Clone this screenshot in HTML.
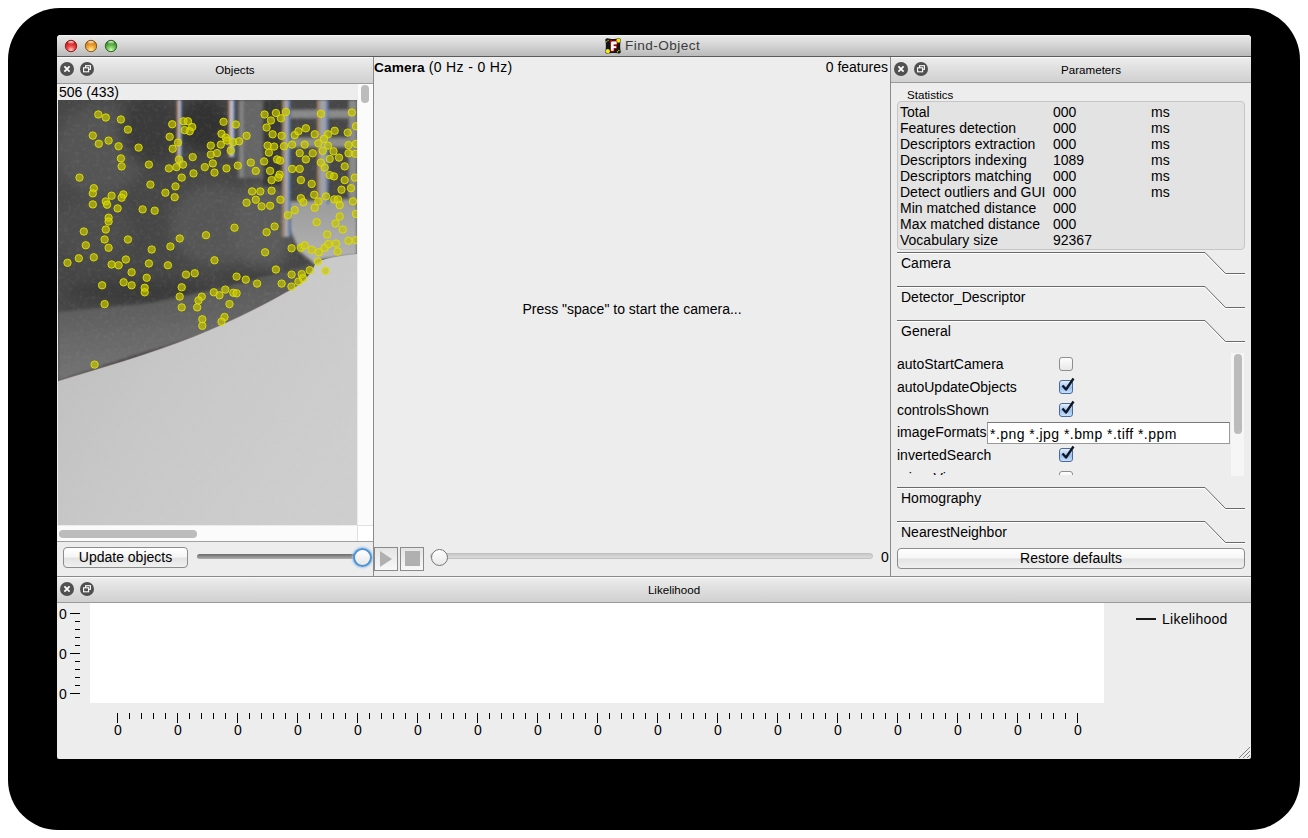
<!DOCTYPE html>
<html><head><meta charset="utf-8">
<style>
html,body{margin:0;padding:0;width:1308px;height:838px;overflow:hidden;background:#fff;font-family:"Liberation Sans",sans-serif;color:#000;position:relative;}
div{box-sizing:border-box;}
.a{position:absolute;}
.t{position:absolute;white-space:nowrap;font-size:14px;line-height:16px;}
#shadow{position:absolute;left:8px;top:8px;width:1292px;height:822px;background:#000;border-radius:52px 52px 50px 50px;}
#win{position:absolute;left:57px;top:35px;width:1194px;height:724px;background:#ededed;border-radius:4px 4px 2px 2px;}
#title{position:absolute;left:57px;top:35px;width:1194px;height:22px;background:linear-gradient(#e9e9e9,#d4d4d4 50%,#bababa);border-bottom:1px solid #5a5a5a;border-radius:4px 4px 0 0;box-shadow:inset 0 1px #f4f4f4;}
.light{position:absolute;top:40px;width:12px;height:12px;border-radius:50%;}
.dtb{position:absolute;background:linear-gradient(#ececec,#d0d0d0);border-top:1px solid #fafafa;border-bottom:1px solid #9a9a9a;}
.dbtn{position:absolute;width:14px;height:14px;}
.dtitle{position:absolute;font-size:11.6px;line-height:14px;white-space:nowrap;text-align:center;}
.btn{position:absolute;border:1px solid #8c8c8c;border-radius:4px;background:linear-gradient(#ffffff,#f6f6f6 45%,#e4e4e4 55%,#f0f0f0);text-align:center;font-size:14px;line-height:18px;white-space:nowrap;}
.vl{position:absolute;width:1px;background:#8a8a8a;}
.hl{position:absolute;height:1px;background:#8a8a8a;}
.tbh{position:absolute;left:897px;width:348px;height:23px;}
.cb{position:absolute;left:1059px;width:14px;height:14px;border:1px solid #8e8e8e;border-radius:3px;background:linear-gradient(#fdfdfd,#e8e8e8);}
.cbc{position:absolute;left:1059px;width:14px;height:14px;border:1px solid #4a6a9a;border-radius:3px;background:linear-gradient(#e6f0ff,#9cc0ee 55%,#c8e0ff);}
</style></head><body>
<div id="shadow"></div>
<div id="win"></div>
<div id="title"></div>
<svg class="a" style="left:63px;top:38px" width="56" height="16" viewBox="0 0 56 16">
<defs>
<radialGradient id="lr" cx="50%" cy="85%" r="70%"><stop offset="0" stop-color="#ffd0d0"/><stop offset="0.45" stop-color="#f05050"/><stop offset="1" stop-color="#c81818"/></radialGradient>
<radialGradient id="ly" cx="50%" cy="85%" r="70%"><stop offset="0" stop-color="#fff0b0"/><stop offset="0.45" stop-color="#f4b040"/><stop offset="1" stop-color="#d07810"/></radialGradient>
<radialGradient id="lg" cx="50%" cy="85%" r="70%"><stop offset="0" stop-color="#d8f8c0"/><stop offset="0.45" stop-color="#78c860"/><stop offset="1" stop-color="#3a8a28"/></radialGradient>
<linearGradient id="hi" x1="0" y1="0" x2="0" y2="1"><stop offset="0" stop-color="#fff" stop-opacity="0.95"/><stop offset="1" stop-color="#fff" stop-opacity="0"/></linearGradient>
</defs>
<g stroke-width="1">
<circle cx="8" cy="8" r="5.7" fill="url(#lr)" stroke="#8a2020"/>
<circle cx="28" cy="8" r="5.7" fill="url(#ly)" stroke="#8a5a18"/>
<circle cx="48" cy="8" r="5.7" fill="url(#lg)" stroke="#2a6a20"/>
</g>
<ellipse cx="8" cy="4.6" rx="3" ry="1.6" fill="url(#hi)"/>
<ellipse cx="28" cy="4.6" rx="3" ry="1.6" fill="url(#hi)"/>
<ellipse cx="48" cy="4.6" rx="3" ry="1.6" fill="url(#hi)"/>
</svg>
<svg class="a" style="left:605px;top:38px" width="16" height="16" viewBox="0 0 16 16">
  <path d="M2.5 0.3C5 1.2 11 1.2 13.5 0.3C15 0.3 15.8 1 15.8 2.5C15 5 15 11 15.8 13.5C15.8 15 15 15.6 13.5 15.6C11 14.8 5 14.8 2.5 15.6C1 15.6 0.3 15 0.3 13.5C1.1 11 1.1 5 0.3 2.5C0.3 1 1 0.3 2.5 0.3Z" fill="#141414"/>
  <circle cx="13.4" cy="2.7" r="2.1" fill="#f0f000"/><circle cx="2.8" cy="13.2" r="2.1" fill="#f0f000"/>
  <path d="M1.3 4.2L3.8 1.5M12 14.3L14.6 11.6" stroke="#c8c800" stroke-width="1.2" stroke-dasharray="1.2 0.8"/>
  <path d="M6 3.6h5.6v2.7h-3v1.9h2.6v1.9h-2.6v2.7h-2.6z" fill="#fff" stroke="#e01010" stroke-width="1.5" stroke-linejoin="round" paint-order="stroke"/>
  <path d="M4.6 3.5L6.5 1.8L7 4z" fill="#f01010"/>
</svg>
<div class="t" style="left:625px;top:38px;font-size:13.6px;letter-spacing:0.45px;color:#3c3c3c;">Find-Object</div>

<!-- ===== Objects dock ===== -->
<div class="dtb" style="left:57px;top:57px;width:316px;height:27px;"></div>
<svg class="dbtn" style="left:60px;top:62px" viewBox="0 0 14 14"><circle cx="7" cy="7" r="7" fill="#505050"/><path d="M4.4 4.4l5.2 5.2M9.6 4.4l-5.2 5.2" stroke="#fff" stroke-width="1.8"/></svg>
<svg class="dbtn" style="left:80px;top:62px" viewBox="0 0 14 14"><circle cx="7" cy="7" r="7" fill="#505050"/><rect x="5.6" y="3.7" width="4.8" height="3.6" fill="none" stroke="#fff" stroke-width="1.1"/><rect x="3.6" y="5.8" width="5" height="4" fill="#505050" stroke="#fff" stroke-width="1.1"/></svg>
<div class="dtitle" style="left:97px;width:276px;top:63px;">Objects</div>
<div class="t" style="left:59px;top:84px;">506 (433)</div>
<!-- scroll area frame -->
<div class="a" style="left:357px;top:84px;width:16px;height:441px;background:#fbfbfb;border-left:1px solid #ececec;"></div>
<div class="a" style="left:361px;top:85px;width:8px;height:18px;border-radius:4px;background:#bcbcbc;"></div>
<div class="a" style="left:57px;top:525px;width:300px;height:16px;background:#fbfbfb;border-top:1px solid #ececec;"></div>
<div class="a" style="left:59px;top:530px;width:138px;height:8px;border-radius:4px;background:#bcbcbc;"></div>
<div class="a" style="left:357px;top:525px;width:16px;height:16px;background:#fff;border-left:1px solid #e0e0e0;border-top:1px solid #e0e0e0;"></div>
<div class="hl" style="left:57px;top:541px;width:316px;background:#a0a0a0;"></div>
<svg class="a" style="left:58px;top:100px" width="299" height="425" viewBox="58 100 299 425">
<defs>
<filter id="bl" x="-10%" y="-10%" width="120%" height="120%"><feGaussianBlur stdDeviation="1.6"/></filter>
<filter id="bl1" x="-50%" y="-10%" width="200%" height="120%"><feGaussianBlur stdDeviation="0.8"/></filter>
<filter id="bl4" x="-30%" y="-30%" width="160%" height="160%"><feGaussianBlur stdDeviation="7"/></filter>
<filter id="noise" x="0" y="0" width="100%" height="100%"><feTurbulence type="fractalNoise" baseFrequency="0.25" numOctaves="2" seed="3"/><feColorMatrix values="0 0 0 0 0.5  0 0 0 0 0.5  0 0 0 0 0.5  0 0 0 1.4 -0.7"/></filter>
<linearGradient id="sh" x1="0" y1="0" x2="0.2" y2="1"><stop offset="0" stop-color="#3c3c3c"/><stop offset="0.28" stop-color="#585858"/><stop offset="0.7" stop-color="#6a6a6a"/><stop offset="1" stop-color="#747474"/></linearGradient>
<linearGradient id="rd" x1="0" y1="0" x2="1" y2="0.6"><stop offset="0" stop-color="#bcbcbc"/><stop offset="0.5" stop-color="#c8c8c8"/><stop offset="1" stop-color="#cecece"/></linearGradient>
<linearGradient id="fl" x1="0" y1="0" x2="0" y2="1"><stop offset="0" stop-color="#9a9a9a"/><stop offset="1" stop-color="#b4b4b4"/></linearGradient>
</defs>
<rect x="58" y="100" width="299" height="425" fill="#474747"/>
<g filter="url(#bl4)">
<ellipse cx="100" cy="150" rx="45" ry="45" fill="#555"/>
<ellipse cx="150" cy="130" rx="30" ry="35" fill="#3a3a3a"/>
<ellipse cx="205" cy="125" rx="25" ry="28" fill="#333"/>
<ellipse cx="90" cy="230" rx="40" ry="30" fill="#4e4e4e"/>
<ellipse cx="215" cy="225" rx="45" ry="40" fill="#565656"/>
<ellipse cx="262" cy="228" rx="30" ry="45" fill="#5c5c5c"/>
<ellipse cx="140" cy="292" rx="75" ry="12" fill="#3a3a3a"/>
<ellipse cx="255" cy="278" rx="35" ry="12" fill="#404040"/>
</g>
<g filter="url(#bl)">
<polygon points="58,312 150,303 230,286 290,270 316,262 312,276 300,288 273,301 245,317 207,334 132,356 82,373 58,381" fill="url(#sh)"/>
<rect x="238" y="100" width="26" height="78" fill="#666"/>
<rect x="263" y="100" width="20" height="86" fill="#383838"/>
<rect x="288" y="100" width="69" height="105" fill="#464646"/>
<rect x="290" y="110" width="67" height="8" fill="#8a8a8a"/>
<rect x="290" y="138" width="67" height="9" fill="#8c8c8c"/>
<polygon points="289,202 357,199 357,255 322,259 315,264 300,252 290,230" fill="url(#fl)"/>
<rect x="349" y="100" width="8" height="105" fill="#8a8a8a"/>
<rect x="240" y="100" width="3" height="78" fill="#8a8a8a"/>
</g>
<g filter="url(#bl1)">
<rect x="176.5" y="100" width="2" height="66" fill="#b08060"/>
<rect x="178.5" y="100" width="2" height="66" fill="#d0d0d8"/>
<rect x="180.5" y="100" width="1.5" height="66" fill="#6080b0"/>
<rect x="228" y="100" width="2" height="57" fill="#a07860"/>
<rect x="230" y="100" width="3" height="57" fill="#c0c0c8"/>
<rect x="233" y="100" width="2" height="57" fill="#6080b0"/>
<rect x="282" y="100" width="2.5" height="137" fill="#a08060"/>
<rect x="284.5" y="100" width="4" height="137" fill="#a8a8b0"/>
<rect x="288.5" y="100" width="2" height="137" fill="#6080b0"/>
<rect x="317" y="100" width="2.5" height="105" fill="#a08060"/>
<rect x="319.5" y="100" width="7" height="105" fill="#a0a0a8"/>
<rect x="326.5" y="100" width="2" height="105" fill="#6080b0"/>
</g>
<path d="M58,381 C100,368 150,354 195,336 C230,322 262,306 290,290 C305,282 312,272 315,264 C322,258 340,256 357,254 L357,525 L58,525 Z" fill="url(#rd)"/>
<path d="M58,381 C100,368 150,354 195,336 C230,322 262,306 290,290 C305,282 312,272 315,264" fill="none" stroke="#7a6a60" stroke-width="0.8" opacity="0.6"/>
<rect x="58" y="100" width="299" height="425" filter="url(#noise)" opacity="0.18"/>
<g fill="#c8c800" fill-opacity="0.66" stroke="#e0e000" stroke-opacity="0.92" stroke-width="1"><circle cx="98.3" cy="114.5" r="3.7"/><circle cx="105.8" cy="117.5" r="3.7"/><circle cx="120.9" cy="119.5" r="3.7"/><circle cx="127.9" cy="129.6" r="3.7"/><circle cx="92.8" cy="135.6" r="3.7"/><circle cx="98.8" cy="143.8" r="3.7"/><circle cx="108.6" cy="140.6" r="3.7"/><circle cx="118.6" cy="146.3" r="3.7"/><circle cx="138.6" cy="147.6" r="3.7"/><circle cx="120.9" cy="158.4" r="3.7"/><circle cx="121.6" cy="166.4" r="3.7"/><circle cx="148.9" cy="164.6" r="3.7"/><circle cx="79.5" cy="177.6" r="3.7"/><circle cx="93.8" cy="188.2" r="3.7"/><circle cx="92.8" cy="193.4" r="3.7"/><circle cx="111.6" cy="195.7" r="3.7"/><circle cx="123.4" cy="194.4" r="3.7"/><circle cx="121.6" cy="197.7" r="3.7"/><circle cx="105.8" cy="201.4" r="3.7"/><circle cx="107.1" cy="204.7" r="3.7"/><circle cx="92.8" cy="204.4" r="3.7"/><circle cx="117.6" cy="208.4" r="3.7"/><circle cx="142.6" cy="209.4" r="3.7"/><circle cx="154.7" cy="210.7" r="3.7"/><circle cx="150.4" cy="184.6" r="3.7"/><circle cx="165.4" cy="192.7" r="3.7"/><circle cx="175.5" cy="186.4" r="3.7"/><circle cx="174.7" cy="197.2" r="3.7"/><circle cx="108.6" cy="217.7" r="3.7"/><circle cx="108.6" cy="221.5" r="3.7"/><circle cx="105.8" cy="229.5" r="3.7"/><circle cx="83.8" cy="231.5" r="3.7"/><circle cx="104.6" cy="239.5" r="3.7"/><circle cx="127.9" cy="239.5" r="3.7"/><circle cx="85.8" cy="245.3" r="3.7"/><circle cx="108.6" cy="247.8" r="3.7"/><circle cx="151.7" cy="249.5" r="3.7"/><circle cx="170.4" cy="246.5" r="3.7"/><circle cx="179.7" cy="238.5" r="3.7"/><circle cx="206.0" cy="235.2" r="3.7"/><circle cx="67.5" cy="262.8" r="3.7"/><circle cx="78.8" cy="258.3" r="3.7"/><circle cx="93.8" cy="257.3" r="3.7"/><circle cx="125.9" cy="259.5" r="3.7"/><circle cx="111.6" cy="264.5" r="3.7"/><circle cx="118.6" cy="265.3" r="3.7"/><circle cx="148.9" cy="263.5" r="3.7"/><circle cx="167.9" cy="265.3" r="3.7"/><circle cx="131.6" cy="272.3" r="3.7"/><circle cx="146.7" cy="277.8" r="3.7"/><circle cx="102.1" cy="285.3" r="3.7"/><circle cx="123.6" cy="282.3" r="3.7"/><circle cx="131.6" cy="285.3" r="3.7"/><circle cx="144.7" cy="287.8" r="3.7"/><circle cx="144.7" cy="292.3" r="3.7"/><circle cx="181.7" cy="287.3" r="3.7"/><circle cx="186.0" cy="274.6" r="3.7"/><circle cx="194.7" cy="273.3" r="3.7"/><circle cx="104.6" cy="304.1" r="3.7"/><circle cx="179.7" cy="296.6" r="3.7"/><circle cx="201.8" cy="296.6" r="3.7"/><circle cx="198.5" cy="300.4" r="3.7"/><circle cx="181.7" cy="307.4" r="3.7"/><circle cx="197.2" cy="307.4" r="3.7"/><circle cx="172.2" cy="124.3" r="3.7"/><circle cx="183.5" cy="121.3" r="3.7"/><circle cx="188.0" cy="121.3" r="3.7"/><circle cx="192.2" cy="127.0" r="3.7"/><circle cx="189.7" cy="131.3" r="3.7"/><circle cx="184.7" cy="130.1" r="3.7"/><circle cx="169.7" cy="136.8" r="3.7"/><circle cx="178.0" cy="142.6" r="3.7"/><circle cx="172.7" cy="148.8" r="3.7"/><circle cx="192.7" cy="157.1" r="3.7"/><circle cx="179.0" cy="159.6" r="3.7"/><circle cx="168.9" cy="168.4" r="3.7"/><circle cx="176.5" cy="167.1" r="3.7"/><circle cx="183.0" cy="164.6" r="3.7"/><circle cx="204.8" cy="167.1" r="3.7"/><circle cx="193.5" cy="173.4" r="3.7"/><circle cx="181.7" cy="177.6" r="3.7"/><circle cx="223.5" cy="121.8" r="3.7"/><circle cx="235.8" cy="124.5" r="3.7"/><circle cx="264.6" cy="114.5" r="3.7"/><circle cx="275.9" cy="113.0" r="3.7"/><circle cx="285.9" cy="112.0" r="3.7"/><circle cx="270.9" cy="120.5" r="3.7"/><circle cx="280.9" cy="118.3" r="3.7"/><circle cx="320.9" cy="113.8" r="3.7"/><circle cx="351.8" cy="112.5" r="3.7"/><circle cx="266.6" cy="127.5" r="3.7"/><circle cx="246.6" cy="135.8" r="3.7"/><circle cx="221.5" cy="133.8" r="3.7"/><circle cx="225.8" cy="137.6" r="3.7"/><circle cx="227.0" cy="140.6" r="3.7"/><circle cx="233.3" cy="142.1" r="3.7"/><circle cx="239.1" cy="141.3" r="3.7"/><circle cx="220.8" cy="144.6" r="3.7"/><circle cx="210.8" cy="145.6" r="3.7"/><circle cx="230.8" cy="150.6" r="3.7"/><circle cx="210.8" cy="154.6" r="3.7"/><circle cx="217.0" cy="153.1" r="3.7"/><circle cx="212.8" cy="163.4" r="3.7"/><circle cx="214.5" cy="172.6" r="3.7"/><circle cx="226.5" cy="168.4" r="3.7"/><circle cx="237.8" cy="165.6" r="3.7"/><circle cx="250.8" cy="162.6" r="3.7"/><circle cx="255.8" cy="170.9" r="3.7"/><circle cx="264.1" cy="161.4" r="3.7"/><circle cx="270.1" cy="170.9" r="3.7"/><circle cx="272.6" cy="134.3" r="3.7"/><circle cx="281.6" cy="135.8" r="3.7"/><circle cx="294.7" cy="135.1" r="3.7"/><circle cx="298.4" cy="131.3" r="3.7"/><circle cx="305.9" cy="128.3" r="3.7"/><circle cx="314.7" cy="134.3" r="3.7"/><circle cx="328.0" cy="134.3" r="3.7"/><circle cx="334.7" cy="130.8" r="3.7"/><circle cx="347.7" cy="132.6" r="3.7"/><circle cx="356.0" cy="126.3" r="3.7"/><circle cx="267.6" cy="145.6" r="3.7"/><circle cx="274.1" cy="146.6" r="3.7"/><circle cx="268.9" cy="152.6" r="3.7"/><circle cx="283.9" cy="146.3" r="3.7"/><circle cx="292.1" cy="144.6" r="3.7"/><circle cx="304.7" cy="144.6" r="3.7"/><circle cx="318.4" cy="143.3" r="3.7"/><circle cx="324.0" cy="138.8" r="3.7"/><circle cx="328.0" cy="145.6" r="3.7"/><circle cx="333.5" cy="151.3" r="3.7"/><circle cx="322.7" cy="150.8" r="3.7"/><circle cx="299.7" cy="153.1" r="3.7"/><circle cx="312.7" cy="153.3" r="3.7"/><circle cx="305.9" cy="159.4" r="3.7"/><circle cx="348.5" cy="145.1" r="3.7"/><circle cx="356.0" cy="143.8" r="3.7"/><circle cx="348.5" cy="153.3" r="3.7"/><circle cx="355.5" cy="153.8" r="3.7"/><circle cx="339.0" cy="157.6" r="3.7"/><circle cx="329.7" cy="158.9" r="3.7"/><circle cx="277.1" cy="159.4" r="3.7"/><circle cx="280.1" cy="160.6" r="3.7"/><circle cx="292.1" cy="168.9" r="3.7"/><circle cx="299.7" cy="168.9" r="3.7"/><circle cx="320.9" cy="162.6" r="3.7"/><circle cx="324.7" cy="167.6" r="3.7"/><circle cx="344.7" cy="166.4" r="3.7"/><circle cx="329.7" cy="175.1" r="3.7"/><circle cx="334.0" cy="176.4" r="3.7"/><circle cx="279.6" cy="174.6" r="3.7"/><circle cx="278.4" cy="177.6" r="3.7"/><circle cx="271.6" cy="180.1" r="3.7"/><circle cx="300.9" cy="180.1" r="3.7"/><circle cx="311.7" cy="183.9" r="3.7"/><circle cx="344.7" cy="180.1" r="3.7"/><circle cx="354.8" cy="177.6" r="3.7"/><circle cx="351.0" cy="188.2" r="3.7"/><circle cx="341.5" cy="189.7" r="3.7"/><circle cx="252.1" cy="191.4" r="3.7"/><circle cx="260.3" cy="191.4" r="3.7"/><circle cx="271.6" cy="190.7" r="3.7"/><circle cx="255.8" cy="199.7" r="3.7"/><circle cx="246.6" cy="202.7" r="3.7"/><circle cx="261.6" cy="206.4" r="3.7"/><circle cx="270.1" cy="205.7" r="3.7"/><circle cx="280.4" cy="199.7" r="3.7"/><circle cx="300.9" cy="198.2" r="3.7"/><circle cx="303.4" cy="202.2" r="3.7"/><circle cx="314.2" cy="194.7" r="3.7"/><circle cx="318.4" cy="201.4" r="3.7"/><circle cx="314.7" cy="207.7" r="3.7"/><circle cx="326.0" cy="196.4" r="3.7"/><circle cx="334.2" cy="199.4" r="3.7"/><circle cx="338.0" cy="199.4" r="3.7"/><circle cx="339.7" cy="205.2" r="3.7"/><circle cx="353.0" cy="201.4" r="3.7"/><circle cx="356.0" cy="213.9" r="3.7"/><circle cx="287.9" cy="215.2" r="3.7"/><circle cx="294.7" cy="210.2" r="3.7"/><circle cx="339.7" cy="216.5" r="3.7"/><circle cx="316.7" cy="222.2" r="3.7"/><circle cx="335.5" cy="223.5" r="3.7"/><circle cx="342.7" cy="229.5" r="3.7"/><circle cx="234.5" cy="227.7" r="3.7"/><circle cx="266.6" cy="232.2" r="3.7"/><circle cx="274.6" cy="226.5" r="3.7"/><circle cx="327.2" cy="234.5" r="3.7"/><circle cx="348.5" cy="240.7" r="3.7"/><circle cx="356.0" cy="240.2" r="3.7"/><circle cx="291.6" cy="248.3" r="3.7"/><circle cx="300.9" cy="247.8" r="3.7"/><circle cx="304.7" cy="245.3" r="3.7"/><circle cx="311.7" cy="249.8" r="3.7"/><circle cx="318.9" cy="252.3" r="3.7"/><circle cx="324.7" cy="247.8" r="3.7"/><circle cx="328.5" cy="244.0" r="3.7"/><circle cx="336.0" cy="243.5" r="3.7"/><circle cx="337.7" cy="251.5" r="3.7"/><circle cx="265.1" cy="252.3" r="3.7"/><circle cx="214.5" cy="260.3" r="3.7"/><circle cx="317.9" cy="261.5" r="3.7"/><circle cx="325.5" cy="270.8" r="3.7"/><circle cx="275.9" cy="269.5" r="3.7"/><circle cx="309.7" cy="270.3" r="3.7"/><circle cx="291.6" cy="274.6" r="3.7"/><circle cx="301.7" cy="274.1" r="3.7"/><circle cx="302.9" cy="278.3" r="3.7"/><circle cx="298.4" cy="281.6" r="3.7"/><circle cx="281.6" cy="283.6" r="3.7"/><circle cx="291.4" cy="286.6" r="3.7"/><circle cx="236.6" cy="276.6" r="3.7"/><circle cx="245.8" cy="279.6" r="3.7"/><circle cx="257.1" cy="283.6" r="3.7"/><circle cx="225.3" cy="289.6" r="3.7"/><circle cx="213.8" cy="292.3" r="3.7"/><circle cx="219.5" cy="295.3" r="3.7"/><circle cx="233.3" cy="292.8" r="3.7"/><circle cx="236.6" cy="293.3" r="3.7"/><circle cx="229.5" cy="304.1" r="3.7"/><circle cx="202.3" cy="319.3" r="3.7"/><circle cx="202.3" cy="325.8" r="3.7"/><circle cx="94.6" cy="364.6" r="3.7"/><circle cx="224.5" cy="317.0" r="3.7"/><circle cx="221.5" cy="321.8" r="3.7"/></g>
</svg>

<div class="btn" style="left:63px;top:547px;width:125px;height:21px;">Update objects</div>
<div class="a" style="left:197px;top:554px;width:165px;height:5px;border-radius:3px;background:linear-gradient(#6a6a6a,#b0b0b0);"></div>
<div class="a" style="left:353px;top:548px;width:19px;height:19px;border-radius:50%;border:2.5px solid #4f92d2;background:linear-gradient(#fff,#e6e6e6);box-shadow:0 0 2px 1px #9cc4ee;"></div>
<div class="vl" style="left:373px;top:57px;height:519px;"></div>

<!-- ===== Camera central ===== -->
<div class="t" style="left:374px;top:59px;"><b style="font-size:13.7px;letter-spacing:0.1px">Camera</b> <span style="letter-spacing:0.35px">(0 Hz - 0 Hz)</span></div>
<div class="t" style="left:780px;width:108px;top:59px;text-align:right;">0 features</div>
<div class="t" style="left:374px;width:516px;top:301px;text-align:center;">Press "space" to start the camera...</div>
<div class="a" style="left:374px;top:547px;width:24px;height:24px;border:1px solid #8a8a8a;background:linear-gradient(#e4e4e4,#f8f8f8);"></div>
<svg class="a" style="left:380px;top:551px" width="13" height="16"><path d="M0 0L12 8L0 16z" fill="#b0b0b0"/></svg>
<div class="a" style="left:400px;top:547px;width:24px;height:24px;border:1px solid #8a8a8a;background:linear-gradient(#e4e4e4,#f8f8f8);"></div>
<div class="a" style="left:405px;top:551px;width:15px;height:15px;background:#b0b0b0;"></div>
<div class="a" style="left:430px;top:553px;width:443px;height:6px;border-radius:3px;background:linear-gradient(#c8c8c8,#dcdcdc);border:1px solid #c0c0c0;"></div>
<div class="a" style="left:431px;top:549px;width:17px;height:17px;border-radius:50%;border:1px solid #777;background:linear-gradient(#fff,#e8e8e8);"></div>
<div class="t" style="left:881px;top:549px;">0</div>
<div class="vl" style="left:890px;top:57px;height:519px;"></div>

<!-- ===== Parameters dock ===== -->
<div class="dtb" style="left:891px;top:57px;width:360px;height:26px;"></div>
<svg class="dbtn" style="left:894px;top:62px" viewBox="0 0 14 14"><circle cx="7" cy="7" r="7" fill="#505050"/><path d="M4.4 4.4l5.2 5.2M9.6 4.4l-5.2 5.2" stroke="#fff" stroke-width="1.8"/></svg>
<svg class="dbtn" style="left:914px;top:62px" viewBox="0 0 14 14"><circle cx="7" cy="7" r="7" fill="#505050"/><rect x="5.6" y="3.7" width="4.8" height="3.6" fill="none" stroke="#fff" stroke-width="1.1"/><rect x="3.6" y="5.8" width="5" height="4" fill="#505050" stroke="#fff" stroke-width="1.1"/></svg>
<div class="dtitle" style="left:931px;width:320px;top:63px;">Parameters</div>
<div class="t" style="left:907px;top:88px;font-size:11.6px;line-height:14px;">Statistics</div>
<div class="a" style="left:897px;top:101px;width:348px;height:149px;border:1px solid #c6c6c6;border-radius:4px;background:#e3e3e3;"></div>
<div class="t" style="left:900px;top:104px;">Total</div><div class="t" style="left:1053px;top:104px;">000</div><div class="t" style="left:1151px;top:104px;">ms</div><div class="t" style="left:900px;top:120px;">Features detection</div><div class="t" style="left:1053px;top:120px;">000</div><div class="t" style="left:1151px;top:120px;">ms</div><div class="t" style="left:900px;top:136px;">Descriptors extraction</div><div class="t" style="left:1053px;top:136px;">000</div><div class="t" style="left:1151px;top:136px;">ms</div><div class="t" style="left:900px;top:152px;">Descriptors indexing</div><div class="t" style="left:1053px;top:152px;">1089</div><div class="t" style="left:1151px;top:152px;">ms</div><div class="t" style="left:900px;top:168px;">Descriptors matching</div><div class="t" style="left:1053px;top:168px;">000</div><div class="t" style="left:1151px;top:168px;">ms</div><div class="t" style="left:900px;top:184px;">Detect outliers and GUI</div><div class="t" style="left:1053px;top:184px;">000</div><div class="t" style="left:1151px;top:184px;">ms</div><div class="t" style="left:900px;top:200px;">Min matched distance</div><div class="t" style="left:1053px;top:200px;">000</div><div class="t" style="left:900px;top:216px;">Max matched distance</div><div class="t" style="left:1053px;top:216px;">000</div><div class="t" style="left:900px;top:232px;">Vocabulary size</div><div class="t" style="left:1053px;top:232px;">92367</div>
<svg class="a" style="left:897px;top:252px" width="348" height="23"><path d="M0 0.5H308L328.5 21.5H348" fill="none" stroke="#6a6a6a" stroke-width="1"/><path d="M0 1.5H307.5L328 22.5H348" fill="none" stroke="#fff" stroke-width="1"/></svg><div class="t" style="left:901px;top:255px;">Camera</div><svg class="a" style="left:897px;top:286px" width="348" height="23"><path d="M0 0.5H308L328.5 21.5H348" fill="none" stroke="#6a6a6a" stroke-width="1"/><path d="M0 1.5H307.5L328 22.5H348" fill="none" stroke="#fff" stroke-width="1"/></svg><div class="t" style="left:901px;top:289px;">Detector_Descriptor</div><svg class="a" style="left:897px;top:320px" width="348" height="23"><path d="M0 0.5H308L328.5 21.5H348" fill="none" stroke="#6a6a6a" stroke-width="1"/><path d="M0 1.5H307.5L328 22.5H348" fill="none" stroke="#fff" stroke-width="1"/></svg><div class="t" style="left:901px;top:323px;">General</div><svg class="a" style="left:897px;top:487px" width="348" height="23"><path d="M0 0.5H308L328.5 21.5H348" fill="none" stroke="#6a6a6a" stroke-width="1"/><path d="M0 1.5H307.5L328 22.5H348" fill="none" stroke="#fff" stroke-width="1"/></svg><div class="t" style="left:901px;top:490px;">Homography</div><svg class="a" style="left:897px;top:521px" width="348" height="23"><path d="M0 0.5H308L328.5 21.5H348" fill="none" stroke="#6a6a6a" stroke-width="1"/><path d="M0 1.5H307.5L328 22.5H348" fill="none" stroke="#fff" stroke-width="1"/></svg><div class="t" style="left:901px;top:524px;">NearestNeighbor</div><div class="a" style="left:897px;top:350px;width:348px;height:125px;overflow:hidden;"><div class="t" style="left:0px;top:6px;">autoStartCamera</div><div class="cb" style="left:162px;top:7px;"></div><div class="t" style="left:0px;top:29px;">autoUpdateObjects</div><div class="cbc" style="left:162px;top:30px;"></div><svg class="a" style="left:164px;top:27px" width="14" height="15"><path d="M1.5 8.5L5 12.5L12.5 1.5" fill="none" stroke="#101828" stroke-width="2.4" stroke-linejoin="round"/></svg><div class="t" style="left:0px;top:52px;">controlsShown</div><div class="cbc" style="left:162px;top:53px;"></div><svg class="a" style="left:164px;top:50px" width="14" height="15"><path d="M1.5 8.5L5 12.5L12.5 1.5" fill="none" stroke="#101828" stroke-width="2.4" stroke-linejoin="round"/></svg><div class="t" style="left:0px;top:74px;">imageFormats</div><div class="a" style="left:90px;top:72px;width:243px;height:22px;background:#fff;border:1px solid #9a9a9a;border-top-color:#7a7a7a;"></div><div class="t" style="left:93px;top:76px;letter-spacing:0.45px;">*.png *.jpg *.bmp *.tiff *.ppm</div><div class="t" style="left:0px;top:97px;">invertedSearch</div><div class="cbc" style="left:162px;top:98px;"></div><svg class="a" style="left:164px;top:95px" width="14" height="15"><path d="M1.5 8.5L5 12.5L12.5 1.5" fill="none" stroke="#101828" stroke-width="2.4" stroke-linejoin="round"/></svg><div class="t" style="left:0px;top:120px;">mirrorView</div><div class="cb" style="left:162px;top:121px;"></div></div><div class="a" style="left:1231px;top:353px;width:13px;height:123px;background:#f6f6f6;"></div><div class="a" style="left:1234px;top:354px;width:8px;height:80px;border-radius:4px;background:#bcbcbc;"></div>
<div class="btn" style="left:897px;top:548px;width:348px;height:21px;">Restore defaults</div>

<!-- ===== Likelihood dock ===== -->
<div class="hl" style="left:57px;top:576px;width:1194px;"></div>
<div class="dtb" style="left:57px;top:577px;width:1194px;height:26px;"></div>
<svg class="dbtn" style="left:60px;top:582px" viewBox="0 0 14 14"><circle cx="7" cy="7" r="7" fill="#505050"/><path d="M4.4 4.4l5.2 5.2M9.6 4.4l-5.2 5.2" stroke="#fff" stroke-width="1.8"/></svg>
<svg class="dbtn" style="left:80px;top:582px" viewBox="0 0 14 14"><circle cx="7" cy="7" r="7" fill="#505050"/><rect x="5.6" y="3.7" width="4.8" height="3.6" fill="none" stroke="#fff" stroke-width="1.1"/><rect x="3.6" y="5.8" width="5" height="4" fill="#505050" stroke="#fff" stroke-width="1.1"/></svg>
<div class="dtitle" style="left:97px;width:1154px;top:583px;">Likelihood</div>
<div class="a" style="left:90px;top:603px;width:1014px;height:100px;background:#fff;"></div>
<svg class="a" style="left:57px;top:603px" width="1194" height="150" viewBox="57 603 1194 150"><g stroke="#000" stroke-width="1" shape-rendering="crispEdges"><line x1="70" y1="613.5" x2="80" y2="613.5"/><line x1="75" y1="621.5" x2="80" y2="621.5"/><line x1="75" y1="629.5" x2="80" y2="629.5"/><line x1="75" y1="637.5" x2="80" y2="637.5"/><line x1="75" y1="645.5" x2="80" y2="645.5"/><line x1="70" y1="653.5" x2="80" y2="653.5"/><line x1="75" y1="661.5" x2="80" y2="661.5"/><line x1="75" y1="669.5" x2="80" y2="669.5"/><line x1="75" y1="677.5" x2="80" y2="677.5"/><line x1="75" y1="685.5" x2="80" y2="685.5"/><line x1="70" y1="693.5" x2="80" y2="693.5"/><line x1="117.5" y1="713" x2="117.5" y2="723"/><line x1="129.5" y1="713" x2="129.5" y2="719"/><line x1="141.5" y1="713" x2="141.5" y2="719"/><line x1="153.5" y1="713" x2="153.5" y2="719"/><line x1="165.5" y1="713" x2="165.5" y2="719"/><line x1="177.5" y1="713" x2="177.5" y2="723"/><line x1="189.5" y1="713" x2="189.5" y2="719"/><line x1="201.5" y1="713" x2="201.5" y2="719"/><line x1="213.5" y1="713" x2="213.5" y2="719"/><line x1="225.5" y1="713" x2="225.5" y2="719"/><line x1="237.5" y1="713" x2="237.5" y2="723"/><line x1="249.5" y1="713" x2="249.5" y2="719"/><line x1="261.5" y1="713" x2="261.5" y2="719"/><line x1="273.5" y1="713" x2="273.5" y2="719"/><line x1="285.5" y1="713" x2="285.5" y2="719"/><line x1="297.5" y1="713" x2="297.5" y2="723"/><line x1="309.5" y1="713" x2="309.5" y2="719"/><line x1="321.5" y1="713" x2="321.5" y2="719"/><line x1="333.5" y1="713" x2="333.5" y2="719"/><line x1="345.5" y1="713" x2="345.5" y2="719"/><line x1="357.5" y1="713" x2="357.5" y2="723"/><line x1="369.5" y1="713" x2="369.5" y2="719"/><line x1="381.5" y1="713" x2="381.5" y2="719"/><line x1="393.5" y1="713" x2="393.5" y2="719"/><line x1="405.5" y1="713" x2="405.5" y2="719"/><line x1="417.5" y1="713" x2="417.5" y2="723"/><line x1="429.5" y1="713" x2="429.5" y2="719"/><line x1="441.5" y1="713" x2="441.5" y2="719"/><line x1="453.5" y1="713" x2="453.5" y2="719"/><line x1="465.5" y1="713" x2="465.5" y2="719"/><line x1="477.5" y1="713" x2="477.5" y2="723"/><line x1="489.5" y1="713" x2="489.5" y2="719"/><line x1="501.5" y1="713" x2="501.5" y2="719"/><line x1="513.5" y1="713" x2="513.5" y2="719"/><line x1="525.5" y1="713" x2="525.5" y2="719"/><line x1="537.5" y1="713" x2="537.5" y2="723"/><line x1="549.5" y1="713" x2="549.5" y2="719"/><line x1="561.5" y1="713" x2="561.5" y2="719"/><line x1="573.5" y1="713" x2="573.5" y2="719"/><line x1="585.5" y1="713" x2="585.5" y2="719"/><line x1="597.5" y1="713" x2="597.5" y2="723"/><line x1="609.5" y1="713" x2="609.5" y2="719"/><line x1="621.5" y1="713" x2="621.5" y2="719"/><line x1="633.5" y1="713" x2="633.5" y2="719"/><line x1="645.5" y1="713" x2="645.5" y2="719"/><line x1="657.5" y1="713" x2="657.5" y2="723"/><line x1="669.5" y1="713" x2="669.5" y2="719"/><line x1="681.5" y1="713" x2="681.5" y2="719"/><line x1="693.5" y1="713" x2="693.5" y2="719"/><line x1="705.5" y1="713" x2="705.5" y2="719"/><line x1="717.5" y1="713" x2="717.5" y2="723"/><line x1="729.5" y1="713" x2="729.5" y2="719"/><line x1="741.5" y1="713" x2="741.5" y2="719"/><line x1="753.5" y1="713" x2="753.5" y2="719"/><line x1="765.5" y1="713" x2="765.5" y2="719"/><line x1="777.5" y1="713" x2="777.5" y2="723"/><line x1="789.5" y1="713" x2="789.5" y2="719"/><line x1="801.5" y1="713" x2="801.5" y2="719"/><line x1="813.5" y1="713" x2="813.5" y2="719"/><line x1="825.5" y1="713" x2="825.5" y2="719"/><line x1="837.5" y1="713" x2="837.5" y2="723"/><line x1="849.5" y1="713" x2="849.5" y2="719"/><line x1="861.5" y1="713" x2="861.5" y2="719"/><line x1="873.5" y1="713" x2="873.5" y2="719"/><line x1="885.5" y1="713" x2="885.5" y2="719"/><line x1="897.5" y1="713" x2="897.5" y2="723"/><line x1="909.5" y1="713" x2="909.5" y2="719"/><line x1="921.5" y1="713" x2="921.5" y2="719"/><line x1="933.5" y1="713" x2="933.5" y2="719"/><line x1="945.5" y1="713" x2="945.5" y2="719"/><line x1="957.5" y1="713" x2="957.5" y2="723"/><line x1="969.5" y1="713" x2="969.5" y2="719"/><line x1="981.5" y1="713" x2="981.5" y2="719"/><line x1="993.5" y1="713" x2="993.5" y2="719"/><line x1="1005.5" y1="713" x2="1005.5" y2="719"/><line x1="1017.5" y1="713" x2="1017.5" y2="723"/><line x1="1029.5" y1="713" x2="1029.5" y2="719"/><line x1="1041.5" y1="713" x2="1041.5" y2="719"/><line x1="1053.5" y1="713" x2="1053.5" y2="719"/><line x1="1065.5" y1="713" x2="1065.5" y2="719"/><line x1="1077.5" y1="713" x2="1077.5" y2="723"/></g></svg><div class="t" style="left:59px;top:606px;">0</div><div class="t" style="left:59px;top:646px;">0</div><div class="t" style="left:59px;top:686px;">0</div><div class="t" style="left:108px;top:722px;width:20px;text-align:center;">0</div><div class="t" style="left:168px;top:722px;width:20px;text-align:center;">0</div><div class="t" style="left:228px;top:722px;width:20px;text-align:center;">0</div><div class="t" style="left:288px;top:722px;width:20px;text-align:center;">0</div><div class="t" style="left:348px;top:722px;width:20px;text-align:center;">0</div><div class="t" style="left:408px;top:722px;width:20px;text-align:center;">0</div><div class="t" style="left:468px;top:722px;width:20px;text-align:center;">0</div><div class="t" style="left:528px;top:722px;width:20px;text-align:center;">0</div><div class="t" style="left:588px;top:722px;width:20px;text-align:center;">0</div><div class="t" style="left:648px;top:722px;width:20px;text-align:center;">0</div><div class="t" style="left:708px;top:722px;width:20px;text-align:center;">0</div><div class="t" style="left:768px;top:722px;width:20px;text-align:center;">0</div><div class="t" style="left:828px;top:722px;width:20px;text-align:center;">0</div><div class="t" style="left:888px;top:722px;width:20px;text-align:center;">0</div><div class="t" style="left:948px;top:722px;width:20px;text-align:center;">0</div><div class="t" style="left:1008px;top:722px;width:20px;text-align:center;">0</div><div class="t" style="left:1068px;top:722px;width:20px;text-align:center;">0</div>
<div class="a" style="left:1136px;top:618px;width:20px;height:2px;background:#1a1a1a;"></div>
<div class="t" style="left:1162px;top:611px;letter-spacing:0.25px;">Likelihood</div>
<svg class="a" style="left:1238px;top:746px" width="13" height="13"><path d="M1 12L12 1M5 12L12 5M9 12L12 9" stroke="#808080" stroke-width="1"/></svg>
</body></html>
